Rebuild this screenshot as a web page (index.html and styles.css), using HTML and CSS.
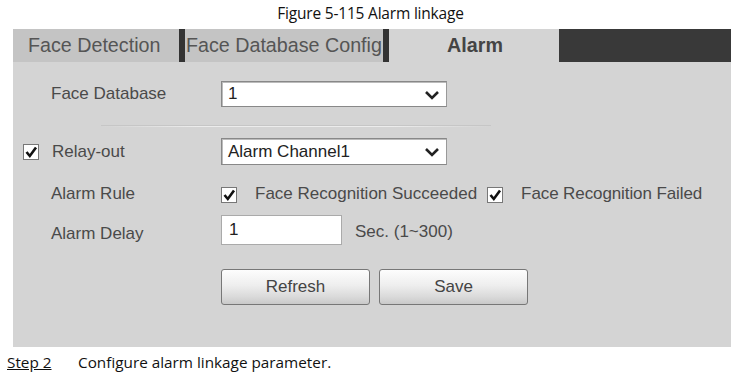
FILE: index.html
```html
<!DOCTYPE html>
<html>
<head>
<meta charset="utf-8">
<link rel="stylesheet" href="styles.css">
</head>
<body>
<div class="caption">Figure 5-115 Alarm linkage</div>
<div class="panel">
  <div class="tabs">
    <div class="tab t1">Face Detection</div>
    <div class="sep"></div>
    <div class="tab t2">Face Database Config</div>
    <div class="sep"></div>
    <div class="tab active">Alarm</div>
    <div class="tabfill"></div>
  </div>
  <div class="form">
    <div class="row r1">
      <div class="label"><span class="lbl">Face Database</span></div>
      <div class="select"><span>1</span><svg class="chev" width="16" height="10" viewBox="0 0 16 10"><path d="M2 2 L8 8 L14 2" fill="none" stroke="#222" stroke-width="2.6"/></svg></div>
    </div>
    <div class="hr"></div>
    <div class="row r2">
      <div class="label cb-label"><span class="cb"><svg width="14" height="14" viewBox="0 0 14 14"><path d="M2.5 7 L5.8 11 L12 2.5" fill="none" stroke="#111" stroke-width="2.6"/></svg></span><span class="lbl">Relay-out</span></div>
      <div class="select"><span>Alarm Channel1</span><svg class="chev" width="16" height="10" viewBox="0 0 16 10"><path d="M2 2 L8 8 L14 2" fill="none" stroke="#222" stroke-width="2.6"/></svg></div>
    </div>
    <div class="row r3">
      <div class="label"><span class="lbl">Alarm Rule</span></div>
      <div class="rules">
        <span class="cb"><svg width="14" height="14" viewBox="0 0 14 14"><path d="M2.5 7 L5.8 11 L12 2.5" fill="none" stroke="#111" stroke-width="2.6"/></svg></span>
        <span class="rtext">Face Recognition Succeeded</span>
        <span class="cb"><svg width="14" height="14" viewBox="0 0 14 14"><path d="M2.5 7 L5.8 11 L12 2.5" fill="none" stroke="#111" stroke-width="2.6"/></svg></span>
        <span class="rtext">Face Recognition Failed</span>
      </div>
    </div>
    <div class="row r4">
      <div class="label"><span class="lbl">Alarm Delay</span></div>
      <div class="input">1</div>
      <span class="unit">Sec. (1~300)</span>
    </div>
    <div class="row r5">
      <div class="label"></div>
      <div class="btns">
        <div class="btn">Refresh</div>
        <div class="btn">Save</div>
      </div>
    </div>
  </div>
</div>
<div class="step"><span class="stepno">Step 2</span><span class="steptext">Configure alarm linkage parameter.</span></div>
</body>
</html>
```
FILE: styles.css
```css
* { box-sizing: border-box; }
html, body { margin: 0; padding: 0; background: #fff; }
body { width: 737px; height: 387px; overflow: hidden; font-family: "Liberation Sans", Arial, sans-serif; }

.caption {
  height: 29px;
  padding-top: 2px;
  text-align: center;
  font-family: "Open Sans", sans-serif;
  font-size: 15.5px;
  color: #111;
  letter-spacing: -0.2px;
  padding-left: 4px;
}

.panel {
  margin-left: 13px;
  width: 718px;
  height: 318px;
  background: #d4d4d4;
}

.tabs {
  display: flex;
  height: 33px;
}
.tab {
  height: 33px;
  font-size: 19.7px;
  color: #555;
  line-height: 33px;
  white-space: nowrap;
  overflow: hidden;
}
.t1 { width: 166px; background: #c4c4c4; padding-left: 15px; }
.t2 { width: 198px; background: #c4c4c4; padding-left: 1px; }
.sep { width: 6px; background: #333; }
.active { width: 170px; background: #d4d4d4; text-align: center; font-weight: bold; color: #444; padding-left: 2px; }
.tabfill { flex: 1; background: #393939; }

.form { padding-top: 19px; }
.row { display: flex; align-items: center; }
.label {
  width: 208px;
  padding-left: 38px;
  font-size: 17px;
  color: #4a4a4a;
  display: flex;
  align-items: center;
}
.cb-label { padding-left: 10px; }
.cb-label .cb { margin-right: 13px; }

.cb {
  width: 16px; height: 16px;
  background: #fff;
  border: 1px solid #777;
  display: inline-flex;
  align-items: center;
  justify-content: center;
  flex: none;
}
.cb svg { display: block; }

.select {
  width: 226px;
  height: 26px;
  background: #fff;
  border: 1px solid #888;
  border-right-color: #999;
  box-shadow: inset 1px 1px 0 #bbb;
  display: flex;
  align-items: center;
  justify-content: space-between;
  padding: 0 6px 0 6px;
  font-size: 17px;
  color: #222;
}
.chev { display: block; margin-top: 1px; }

.r1 { height: 26px; }
.hr {
  margin: 18px 0 0 88px;
  width: 390px;
  height: 2px;
  background: linear-gradient(to right, rgba(255,255,255,0), #ececec 25%, #ececec 75%, rgba(255,255,255,0));
  border-top: 1px solid #c6c6c6;
}
.r2 { margin-top: 11px; height: 27px; }
.r2 .select { height: 27px; }
.r3 { margin-top: 14px; height: 28px; }
.r3 .label { padding-top: 2px; }
.rules { display: flex; align-items: center; font-size: 17px; color: #4a4a4a; padding-top: 2px; }
.rules .cb { margin-top: 1px; }
.rtext { margin-left: 18px; margin-right: 10px; }
.rtext:last-child { letter-spacing: -0.1px; }
.r4 { margin-top: 8px; height: 30px; }
.r4 .label { padding-top: 7px; }
.input {
  width: 121px;
  height: 30px;
  background: #fff;
  border: 1px solid #aaa;
  font-size: 17px;
  color: #222;
  padding-left: 7px;
  line-height: 27px;
}
.unit { margin-left: 13px; font-size: 17px; color: #4a4a4a; margin-top: 4px; }

.r5 { margin-top: 24px; height: 36px; }
.btns { display: flex; gap: 9px; }
.btn {
  width: 149px;
  height: 36px;
  border: 1px solid #777;
  border-radius: 3px;
  background: linear-gradient(to bottom, #fdfdfd 0%, #eeeeee 45%, #d9d9d9 80%, #c9c9c9 100%);
  font-size: 17px;
  color: #444;
  text-align: center;
  line-height: 33px;
}

.step {
  display: flex;
  padding-left: 7px;
  margin-top: 5px;
  font-family: "Open Sans", sans-serif;
  font-size: 15.3px;
  color: #111;
}
.stepno { text-decoration: underline; width: 71px; }
```
